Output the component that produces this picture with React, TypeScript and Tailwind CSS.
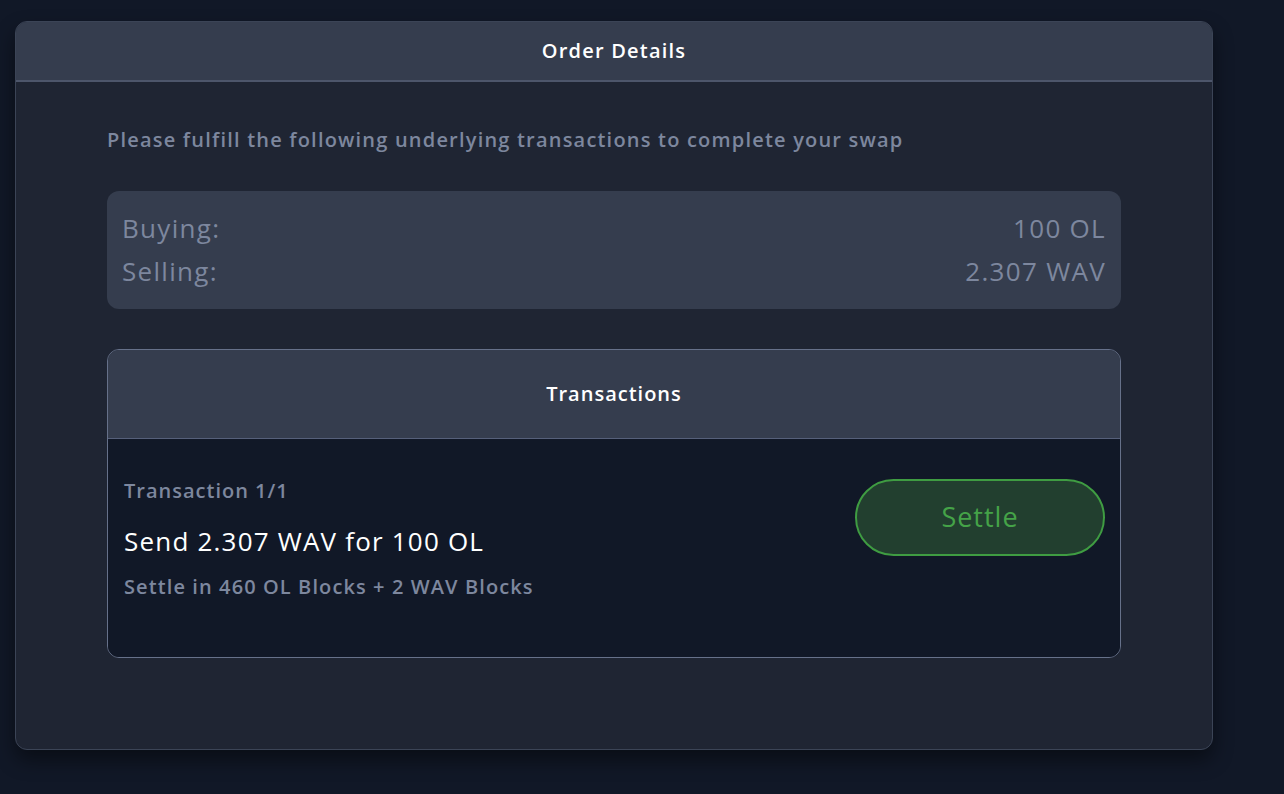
import React from "react";

const font = { fontFamily: "'Open Sans', 'Noto Sans', sans-serif" };

function SummaryRow({ label, value }: { label: string; value: string }) {
  return (
    <div className="flex items-center justify-between">
      <span>{label}</span>
      <span>{value}</span>
    </div>
  );
}

function TransactionRow() {
  return (
    <div className="flex items-start justify-between bg-[#111827] pl-[16px] pr-[15px] pt-[38px] pb-[56px]">
      <div className="flex flex-col">
        <span className="text-[20px] font-semibold leading-[28px] tracking-[1px] text-[#7d879e]">Transaction 1/1</span>
        <span className="mt-[18px] text-[26px] font-medium leading-[36px] tracking-[1.2px] text-white">
          Send 2.307 WAV for 100 OL
        </span>
        <span className="mt-[14px] text-[20px] font-semibold leading-[28px] tracking-[1.1px] text-[#7d879e]">
          Settle in 460 OL Blocks + 2 WAV Blocks
        </span>
      </div>
      <button
        type="button"
        className="mt-[2px] flex h-[77px] w-[250px] items-center justify-center rounded-full border-2 border-[#3f9c42] bg-[#223f2f] text-[27px] font-medium tracking-[1px] text-[#45a348]"
      >
        Settle
      </button>
    </div>
  );
}

export default function App() {
  return (
    <div className="min-h-[794px] w-full bg-[#111827] pt-[21px] pl-[15px]" style={font}>
      <div className="w-[1198px] overflow-hidden rounded-[12px] border border-[#3b4456] bg-[#1f2533] shadow-[0_10px_20px_rgba(0,0,0,0.45)]">
        <div className="flex h-[60px] items-center justify-center border-b-2 border-[#4d566b] bg-[#353d4e]">
          <h1 className="text-[20px] font-semibold tracking-[1.2px] text-white">Order Details</h1>
        </div>
        <div className="px-[91px] pt-[43px] pb-[91px]">
          <p className="text-[20px] font-semibold leading-[30px] tracking-[1.2px] text-[#7d879e]">
            Please fulfill the following underlying transactions to complete your swap
          </p>
          <div className="mt-[36px] flex flex-col rounded-[12px] bg-[#353d4e] px-[15px] py-[16px] text-[26px] font-medium leading-[43px] tracking-[1.3px] text-[#7d879e]">
            <SummaryRow label="Buying:" value="100 OL" />
            <SummaryRow label="Selling:" value="2.307 WAV" />
          </div>
          <div className="mt-[40px] overflow-hidden rounded-[12px] border-[1.5px] border-[#66718a]">
            <div className="flex h-[89px] items-center justify-center border-b-[1.5px] border-[#56607a] bg-[#353d4e]">
              <h2 className="text-[20px] font-semibold tracking-[1px] text-white">Transactions</h2>
            </div>
            <TransactionRow />
          </div>
        </div>
      </div>
    </div>
  );
}
